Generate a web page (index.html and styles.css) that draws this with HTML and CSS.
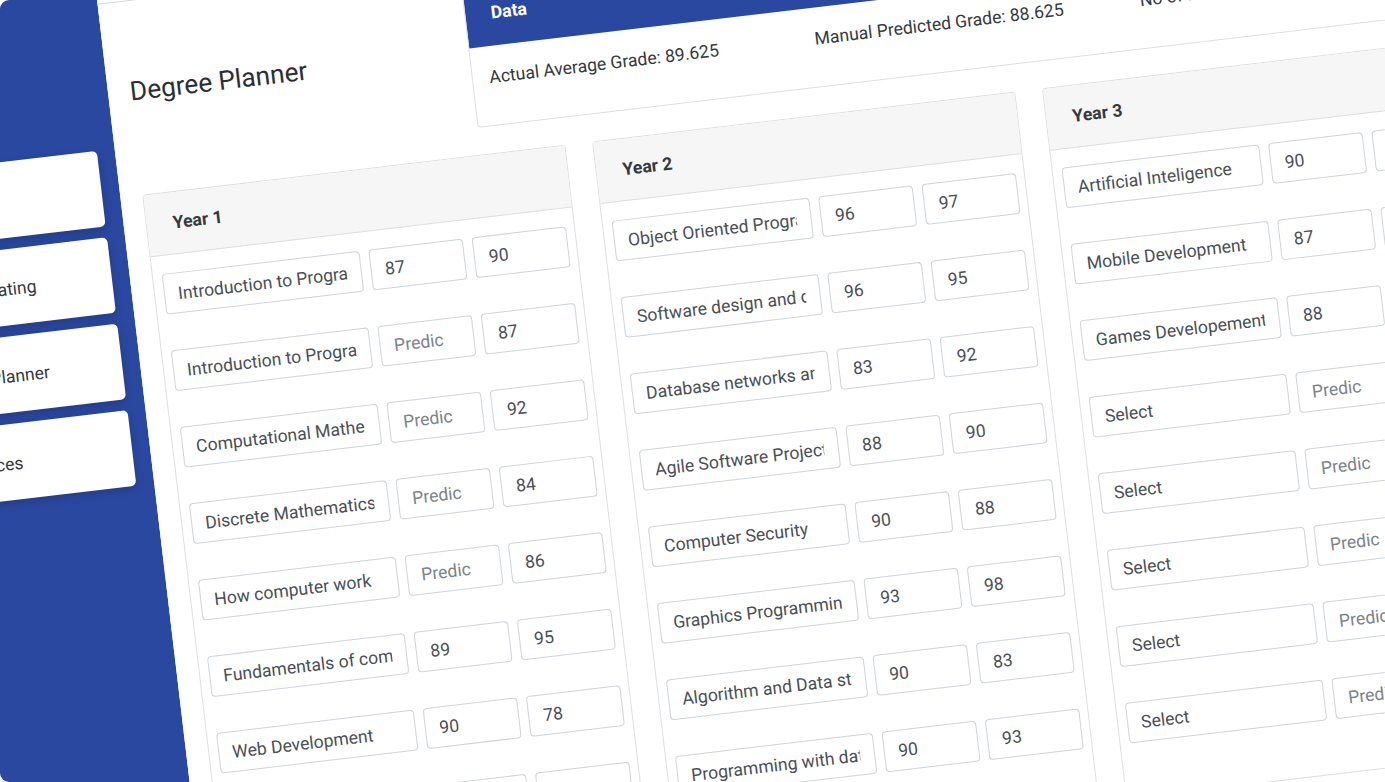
FILE: index.html
```html
<!DOCTYPE html>
<html lang="en">
<head>
  <meta charset="UTF-8" />
  <title>Degree Planner</title>
  <link rel="stylesheet" href="styles.css">
</head>
<body>
  <div class="viewport">
    <div class="app">
      <aside class="sidebar">
        <div class="nav-item">Home</div>
        <div class="nav-item">Content Rating</div>
        <div class="nav-item">Degree Planner</div>
        <div class="nav-item">Resources</div>
      </aside>

      <main class="main">
        <div class="topbar"></div>
        <div class="content">
          <div class="head">
            <h1 class="title">Degree Planner</h1>
            <section class="data-card">
              <div class="data-header">Data</div>
              <div class="data-body">
                <span>Actual Average Grade: 89.625</span>
                <span>Manual Predicted Grade: 88.625</span>
                <span>No of Modules: 24</span>
              </div>
            </section>
          </div>

          <div class="years">
            <section class="year">
              <div class="year-header">Year 1</div>
              <div class="year-body">
                <div class="row"><input class="module" readonly value="Introduction to Programming I"><input class="grade" value="87"><input class="grade" value="90"></div>
                <div class="row"><input class="module" readonly value="Introduction to Programming II"><input class="grade" placeholder="Predic"><input class="grade" value="87"></div>
                <div class="row"><input class="module" readonly value="Computational Mathematics"><input class="grade" placeholder="Predic"><input class="grade" value="92"></div>
                <div class="row"><input class="module" readonly value="Discrete Mathematics"><input class="grade" placeholder="Predic"><input class="grade" value="84"></div>
                <div class="row"><input class="module" readonly value="How computer work"><input class="grade" placeholder="Predic"><input class="grade" value="86"></div>
                <div class="row"><input class="module" readonly value="Fundamentals of computer science"><input class="grade" value="89"><input class="grade" value="95"></div>
                <div class="row"><input class="module" readonly value="Web Development"><input class="grade" value="90"><input class="grade" value="78"></div>
                <div class="row"><input class="module" readonly value="Final Project"><input class="grade" value="90"><input class="grade" value="88"></div>
              </div>
            </section>

            <section class="year">
              <div class="year-header">Year 2</div>
              <div class="year-body">
                <div class="row"><input class="module" readonly value="Object Oriented Programming"><input class="grade" value="96"><input class="grade" value="97"></div>
                <div class="row"><input class="module" readonly value="Software design and development"><input class="grade" value="96"><input class="grade" value="95"></div>
                <div class="row"><input class="module" readonly value="Database networks and the web"><input class="grade" value="83"><input class="grade" value="92"></div>
                <div class="row"><input class="module" readonly value="Agile Software Projects"><input class="grade" value="88"><input class="grade" value="90"></div>
                <div class="row"><input class="module" readonly value="Computer Security"><input class="grade" value="90"><input class="grade" value="88"></div>
                <div class="row"><input class="module" readonly value="Graphics Programming"><input class="grade" value="93"><input class="grade" value="98"></div>
                <div class="row"><input class="module" readonly value="Algorithm and Data structures"><input class="grade" value="90"><input class="grade" value="83"></div>
                <div class="row"><input class="module" readonly value="Programming with data"><input class="grade" value="90"><input class="grade" value="93"></div>
              </div>
            </section>

            <section class="year">
              <div class="year-header">Year 3</div>
              <div class="year-body">
                <div class="row"><input class="module" readonly value="Artificial Inteligence"><input class="grade" value="90"><input class="grade" placeholder="Predic"></div>
                <div class="row"><input class="module" readonly value="Mobile Development"><input class="grade" value="87"><input class="grade" placeholder="Predic"></div>
                <div class="row"><input class="module" readonly value="Games Developement"><input class="grade" value="88"><input class="grade" placeholder="Predic"></div>
                <div class="row"><input class="module" readonly value="Select"><input class="grade" placeholder="Predic"><input class="grade" placeholder="Predic"></div>
                <div class="row"><input class="module" readonly value="Select"><input class="grade" placeholder="Predic"><input class="grade" placeholder="Predic"></div>
                <div class="row"><input class="module" readonly value="Select"><input class="grade" placeholder="Predic"><input class="grade" placeholder="Predic"></div>
                <div class="row"><input class="module" readonly value="Select"><input class="grade" placeholder="Predic"><input class="grade" placeholder="Predic"></div>
                <div class="row"><input class="module" readonly value="Select"><input class="grade" placeholder="Predic"><input class="grade" placeholder="Predic"></div>
              </div>
            </section>
          </div>
        </div>
      </main>
    </div>
  </div>
</body>
</html>
```

FILE: styles.css
```css
html, body {
  margin: 0;
  padding: 0;
  height: 100%;
  overflow: hidden;
  background: #fff;
  font-family: Roboto, "Liberation Sans", sans-serif;
  color: #212529;
}

.viewport {
  position: relative;
  width: 1385px;
  height: 782px;
  overflow: hidden;
  border-radius: 9px;
}

/* the whole app is tilted, like a product shot */
.app {
  position: absolute;
  left: -187px;
  top: -26px;
  width: 1700px;
  height: 1060px;
  display: flex;
  transform: rotate(-6.75deg);
  transform-origin: 0 0;
}

.sidebar {
  box-sizing: border-box;
  width: 279px;
  padding: 209px 18.5px 0 20px;
  display: flex;
  flex-direction: column;
  gap: 11px;
  background: #2a48a0;
}

.nav-item {
  box-sizing: border-box;
  height: 76px;
  padding: 3px 0 0 49px;
  display: flex;
  align-items: center;
  background: #fff;
  border-radius: 5px;
  font-size: 17.6px;
  color: #343a40;
  box-shadow: 0 3px 8px rgba(0, 0, 0, 0.18);
}

.main {
  flex: 1;
  background: #fff;
}

.topbar {
  height: 63px;
  border-bottom: 1px solid #d5d8dc;
}

.content {
  padding: 26px 0 0 22px;
}

.head {
  display: flex;
  height: 141px;
  margin-bottom: 27px;
}

.title {
  width: 341px;
  margin: 0;
  padding-bottom: 13px;
  align-self: center;
  font-size: 26.3px;
  font-weight: 400;
  color: #2b2f33;
}

.data-card {
  box-sizing: border-box;
  width: 989px;
  border: 1px solid #dcdfe3;
  border-radius: 4px;
  overflow: hidden;
}

.data-header {
  box-sizing: border-box;
  height: 60px;
  padding: 0 25.5px 6px;
  display: flex;
  align-items: center;
  background: #2a48a0;
  color: #fff;
  font-size: 17.6px;
  font-weight: 700;
}

.data-body {
  display: grid;
  grid-template-columns: repeat(3, 327.5px);
  padding: 20.5px 16.5px 0;
  font-size: 17.6px;
  color: #343a40;
}

.years {
  display: grid;
  grid-template-columns: repeat(3, 426px);
  gap: 27px;
}

.year {
  border: 1px solid #dcdfe3;
  border-radius: 4px;
}

.year-header {
  box-sizing: border-box;
  height: 62px;
  padding: 0 26px 2px;
  display: flex;
  align-items: center;
  background: #f6f6f6;
  border-bottom: 1px solid #dcdfe3;
  font-size: 17.6px;
  font-weight: 700;
  color: #343a40;
}

.year-body {
  padding: 18px 8px 54px 9px;
  display: flex;
  flex-direction: column;
  gap: 36px;
}

.row {
  display: flex;
  gap: 9.5px;
}

.row input {
  box-sizing: border-box;
  height: 41px;
  padding: 0 14px;
  border: 1px solid #ced4da;
  border-radius: 4px;
  background: #fff;
  font-family: inherit;
  font-size: 17.6px;
  color: #495057;
}

.row input::placeholder {
  color: #7b838b;
}

.row .module {
  width: 199px;
  margin-right: -1px;
  padding-left: 13px;
}

.row .grade {
  width: 95px;
}
```
